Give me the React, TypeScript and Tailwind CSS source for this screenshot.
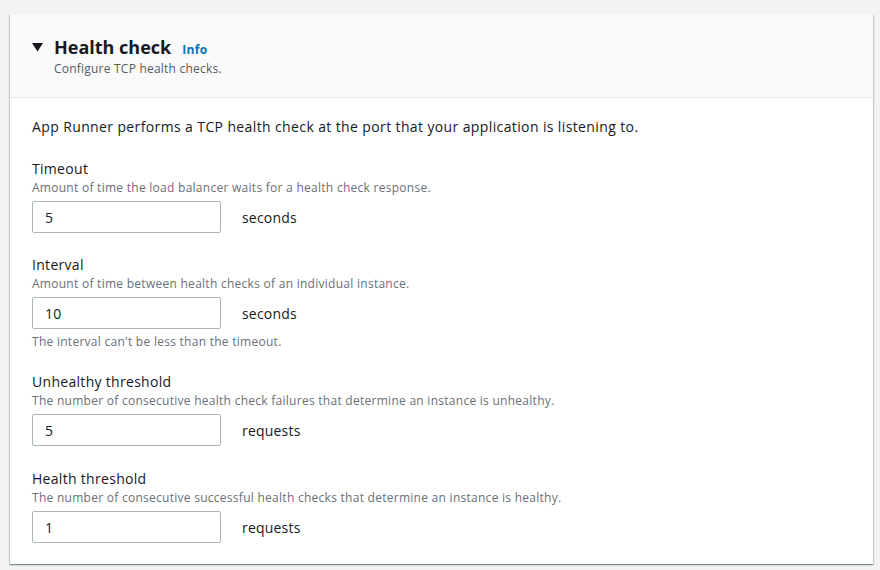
import React from "react";

const Field = ({
  label,
  desc,
  value,
  unit,
  constraint,
}: {
  label: string;
  desc: string;
  value: string;
  unit: string;
  constraint?: string;
}) => (
  <div className="flex flex-col">
    <div className="text-[14px] leading-[22px] tracking-[0.3px] text-[#16191f]">{label}</div>
    <div className="text-[12px] leading-[16px] tracking-[0.27px] text-[#687078]">{desc}</div>
    <div className="mt-[5px] flex items-center">
      <div className="flex h-[32px] w-[189px] items-center rounded-[2px] border border-[#aab7b8] bg-white px-[12px] text-[14px] tracking-[0.3px] text-[#16191f]">
        {value}
      </div>
      <div className="ml-[21px] text-[14px] tracking-[0.2px] text-[#16191f]">{unit}</div>
    </div>
    {constraint && (
      <div className="mt-[5px] text-[12px] leading-[16px] tracking-[0.27px] text-[#687078]">
        {constraint}
      </div>
    )}
  </div>
);

export default function App() {
  return (
    <div
      className="h-[570px] w-[880px] bg-[#f2f3f3] pl-[10px] pr-[7px] pt-[14px]"
      style={{ fontFamily: '"Open Sans", "Noto Sans", sans-serif' }}
    >
      <div className="flex h-[550px] flex-col bg-white shadow-[0_1px_1px_0_rgba(0,28,36,0.3),1px_1px_1px_0_rgba(0,28,36,0.15),-1px_1px_1px_0_rgba(0,28,36,0.15)]">
        <div className="h-[84px] border-b border-[#eaeded] bg-[#fafafa] pl-[22px] pt-[21px]">
          <div className="flex items-center">
            <svg width="11" height="9" viewBox="0 0 11 9" className="mr-[11px]">
              <polygon points="0,0 11,0 5.5,8.5" fill="#16191f" />
            </svg>
            <div className="flex items-baseline">
              <span className="text-[18px] font-bold leading-[24px] text-[#16191f]">Health check</span>
              <span className="ml-[11px] text-[12px] font-bold tracking-[0.3px] text-[#0073bb]">Info</span>
            </div>
          </div>
          <div className="ml-[22px] mt-[2px] text-[12px] leading-[16px] tracking-[0.22px] text-[#545b64]">
            Configure TCP health checks.
          </div>
        </div>
        <div className="flex flex-col gap-[21px] pl-[22px] pt-[19px]">
          <div className="text-[14px] leading-[20px] tracking-[0.38px] text-[#16191f]">
            App Runner performs a TCP health check at the port that your application is listening to.
          </div>
          <Field
            label="Timeout"
            desc="Amount of time the load balancer waits for a health check response."
            value="5"
            unit="seconds"
          />
          <Field
            label="Interval"
            desc="Amount of time between health checks of an individual instance."
            value="10"
            unit="seconds"
            constraint="The interval can't be less than the timeout."
          />
          <Field
            label="Unhealthy threshold"
            desc="The number of consecutive health check failures that determine an instance is unhealthy."
            value="5"
            unit="requests"
          />
          <div className="pt-[1px]">
            <Field
              label="Health threshold"
              desc="The number of consecutive successful health checks that determine an instance is healthy."
              value="1"
              unit="requests"
            />
          </div>
        </div>
      </div>
    </div>
  );
}
